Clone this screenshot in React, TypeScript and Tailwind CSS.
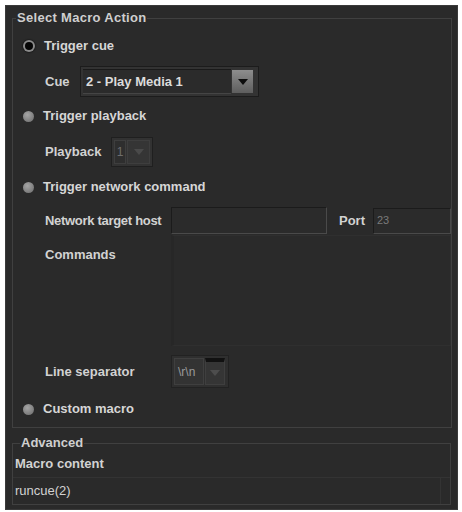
import React from 'react';

const font = { fontFamily: '"Liberation Sans", Arial, sans-serif' };

const Radio = ({ checked, label }: { checked?: boolean; label: string }) => (
  <div className="flex items-center h-[24px] pl-[10px]">
    {checked ? (
      <span className="w-[12px] h-[12px] rounded-full bg-[#8a8a8a] flex items-center justify-center shadow-[0_0_2px_#000]">
        <span className="w-[8px] h-[8px] rounded-full bg-[#050505]" />
      </span>
    ) : (
      <span className="w-[11px] h-[11px] rounded-full bg-[radial-gradient(circle_at_40%_35%,#a5a5a5,#6a6a6a)]" />
    )}
    <span className="ml-[9px] text-[13px] font-bold text-[#d6d6d6]">{label}</span>
  </div>
);

const Label = ({ w, children }: { w: string; children: React.ReactNode }) => (
  <span className={`${w} shrink-0 text-[13px] font-bold text-[#d2d2d2]`}>{children}</span>
);

const Arrow = ({ color }: { color: string }) => (
  <svg width="10" height="6" viewBox="0 0 10 6">
    <path d="M0 0 L10 0 L5 6 Z" fill={color} />
  </svg>
);

export default function App() {
  return (
    <div className="min-h-screen bg-white pt-[5px] pl-[5px]" style={font}>
      <div className="w-[453px] h-[505px] bg-[#2a2a2a] border border-[#3a3a3a] pt-[5px] px-[6px] flex flex-col">
        <fieldset className="border border-[#404040] pb-[6px]">
          <legend className="ml-[3px] px-[1px] text-[13px] leading-[14px] font-bold text-[#cfcfcf] tracking-[0.3px]">Select Macro Action</legend>

          <div className="mt-[9px]">
            <Radio checked label="Trigger cue" />
          </div>

          <div className="mt-[8px] h-[31px] flex items-center pl-[32px]">
            <Label w="w-[35px]">Cue</Label>
            <div className="w-[179px] h-[31px] border border-[#1c1c1c] bg-[#333] p-[2px] flex">
              <div className="flex-1 bg-[#2b2b2b] border-t border-[#1a1a1a] border-b border-b-[#454545] flex items-center pl-[3px] text-[13px] font-bold text-[#dcdcdc]">
                2 - Play Media 1
              </div>
              <div className="w-[21px] ml-[1px] mr-[3px] my-[1px] bg-[linear-gradient(#8d8d8d,#5e5e5e)] flex items-center justify-center">
                <Arrow color="#0c0c0c" />
              </div>
            </div>
          </div>

          <div className="mt-[7px]">
            <Radio label="Trigger playback" />
          </div>

          <div className="mt-[9px] h-[30px] flex items-center pl-[32px]">
            <Label w="w-[66px]">Playback</Label>
            <div className="w-[42px] h-[30px] border border-[#1f1f1f] bg-[#323232] p-[2px] flex">
              <div className="w-[12px] bg-[#2e2e2e] border border-[#3e3e3e] flex items-center justify-center text-[12px] text-[#6e6e6e]">1</div>
              <div className="flex-1 ml-[1px] bg-[#353535] border border-[#3e3e3e] flex items-center justify-center">
                <Arrow color="#4a4a4a" />
              </div>
            </div>
          </div>

          <div className="mt-[8px]">
            <Radio label="Trigger network command" />
          </div>

          <div className="mt-[8px] h-[27px] flex items-center pl-[32px]">
            <Label w="w-[126px] tracking-[-0.3px]">Network target host</Label>
            <div className="w-[156px] h-[27px] bg-[#2b2b2b] border border-[#1b1b1b] border-b-[#4a4a4a] border-r-[#4a4a4a]" />
            <span className="ml-[12px] w-[34px] text-[13px] font-bold text-[#d2d2d2]">Port</span>
            <div className="w-[78px] h-[26px] bg-[#2b2b2b] border border-[#1b1b1b] border-b-[#4a4a4a] border-r-[#4a4a4a] flex items-center pl-[3px] text-[11px] text-[#7a7a7a]">
              23
            </div>
          </div>

          <div className="mt-[1px] h-[111px] flex pl-[32px]">
            <div className="w-[126px] pt-[7px]">
              <Label w="w-[126px]">Commands</Label>
            </div>
            <div className="w-[280px] h-[111px] bg-[#2a2a2a] border-l-[3px] border-l-[#272727] border border-[#2f2f2f]" />
          </div>

          <div className="mt-[9px] h-[33px] flex items-center pl-[32px]">
            <Label w="w-[126px]">Line separator</Label>
            <div className="w-[58px] h-[33px] border border-[#222] bg-[#2f2f2f] p-[2px] flex">
              <div className="w-[30px] bg-[#333] border border-[#3f3f3f] flex items-center pl-[3px] text-[12px] text-[#9a9a9a]">\r\n</div>
              <div className="w-[20px] ml-[1px] bg-[#353535] border-t-[4px] border-t-[#111] border border-[#3f3f3f] flex items-center justify-center">
                <Arrow color="#4d4d4d" />
              </div>
            </div>
          </div>

          <div className="mt-[9px]">
            <Radio label="Custom macro" />
          </div>
        </fieldset>

        <fieldset className="mt-[8px] border border-[#404040] flex-1 mb-[4px]">
          <legend className="ml-[7px] px-[1px] text-[13px] leading-[14px] font-bold text-[#cfcfcf]">Advanced</legend>
          <div className="h-[28px] flex items-center pl-[2px] border-b border-[#333] text-[13px] font-bold text-[#d2d2d2]">
            Macro content
          </div>
          <div className="h-[26px] flex items-center pl-[2px] mr-[9px] border-r border-[#333] text-[13px] text-[#d2d2d2]">
            runcue(2)
          </div>
        </fieldset>
      </div>
    </div>
  );
}
